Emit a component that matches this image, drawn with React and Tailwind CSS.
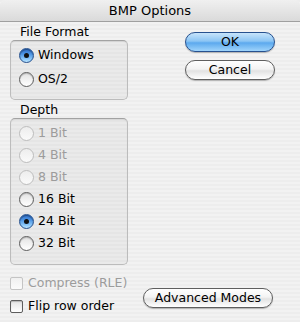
const font = { fontFamily: '"DejaVu Sans", "Lucida Grande", sans-serif' }

function Radio({ label, checked, disabled }) {
  return (
    <div className="flex items-center h-[22px]">
      <span
        className={
          checked
            ? 'relative w-[15px] h-[15px] rounded-full border border-[#24508f] bg-[linear-gradient(#2f6fc9_0%,#4f97e6_40%,#8fcbfa_80%,#bfe6ff_100%)] shadow-[inset_0_1px_1px_rgba(0,0,0,0.35)] flex items-center justify-center'
            : disabled
            ? 'w-[15px] h-[15px] rounded-full border border-[#bdbdbd] bg-[linear-gradient(#ededed,#fafafa)]'
            : 'w-[15px] h-[15px] rounded-full border border-[#5e5e5e] bg-[linear-gradient(#e2e2e2,#ffffff)] shadow-[inset_0_1px_1px_rgba(0,0,0,0.2)]'
        }
      >
        {checked && <span className="w-[5px] h-[5px] rounded-full bg-[#111]" />}
      </span>
      <span className={`ml-[4px] ${disabled ? 'text-[#9c9c9c]' : 'text-black'}`}>{label}</span>
    </div>
  )
}

function Check({ label, disabled }) {
  return (
    <div className="flex items-center h-[21px]">
      <span
        className={
          disabled
            ? 'w-[13px] h-[13px] rounded-[2px] border border-[#c4c4c4] bg-[linear-gradient(#f0f0f0,#fbfbfb)]'
            : 'w-[13px] h-[13px] rounded-[2px] border border-[#5e5e5e] bg-[linear-gradient(#e4e4e4,#ffffff)] shadow-[inset_0_1px_1px_rgba(0,0,0,0.2)]'
        }
      />
      <span className={`ml-[5px] ${disabled ? 'text-[#9c9c9c]' : 'text-black'}`}>{label}</span>
    </div>
  )
}

function AquaButton({ children, primary, className }) {
  return (
    <button
      className={
        (primary
          ? 'border-[#27518f] bg-[linear-gradient(#c7e4fb_0%,#8cc5f4_45%,#5ca9ee_55%,#9fd4fb_100%)] '
          : 'border-[#5f5f5f] bg-[linear-gradient(#ffffff_0%,#f3f3f3_45%,#e2e2e2_55%,#ffffff_100%)] ') +
        'h-[20px] rounded-full border flex items-center justify-center text-black shadow-[0_1px_1px_rgba(0,0,0,0.25)] ' +
        className
      }
    >
      {children}
    </button>
  )
}

function Group({ children, className }) {
  return (
    <div
      className={
        'rounded-[5px] border border-[#bcbcbc] border-t-[#a2a2a2] bg-[rgba(0,0,0,0.03)] shadow-[inset_0_1px_1px_rgba(0,0,0,0.08)] pl-[8px] ' +
        className
      }
    >
      {children}
    </div>
  )
}

export default function App() {
  return (
    <div
      style={font}
      className="w-[300px] h-[322px] flex flex-col text-[12.5px] bg-[repeating-linear-gradient(0deg,#ededed_0px,#ededed_2px,#f2f2f2_2px,#f2f2f2_4px)] overflow-hidden"
    >
      <div className="h-[22px] shrink-0 flex items-center justify-center border-b border-[#a0a0a0] bg-[linear-gradient(#f0f0f0,#dadada)] rounded-t-[5px] text-black text-[13px]">
        BMP Options
      </div>
      <div className="flex flex-1">
        <div className="ml-[10px] w-[118px] flex flex-col">
          <div className="mt-[2px] h-[16px] leading-[16px] pl-[10px]">File Format</div>
          <Group className="h-[60px] pt-[3px]">
            <div className="flex flex-col gap-[2px]">
              <Radio label="Windows" checked />
              <Radio label="OS/2" />
            </div>
          </Group>
          <div className="mt-[2px] h-[16px] leading-[16px] pl-[10px]">Depth</div>
          <Group className="h-[147px] pt-[3px]">
            <Radio label="1 Bit" disabled />
            <Radio label="4 Bit" disabled />
            <Radio label="8 Bit" disabled />
            <Radio label="16 Bit" />
            <Radio label="24 Bit" checked />
            <Radio label="32 Bit" />
          </Group>
          <div className="mt-[8px] flex flex-col gap-[2px]">
            <Check label="Compress (RLE)" disabled />
            <Check label="Flip row order" />
          </div>
        </div>
        <div className="ml-[15px] w-[132px] flex flex-col pt-[10px] pb-[14px]">
          <AquaButton primary className="self-end w-[90px]">OK</AquaButton>
          <AquaButton className="self-end w-[90px] mt-[8px]">Cancel</AquaButton>
          <AquaButton className="self-start w-[130px] mt-auto">Advanced Modes</AquaButton>
        </div>
      </div>
    </div>
  )
}
